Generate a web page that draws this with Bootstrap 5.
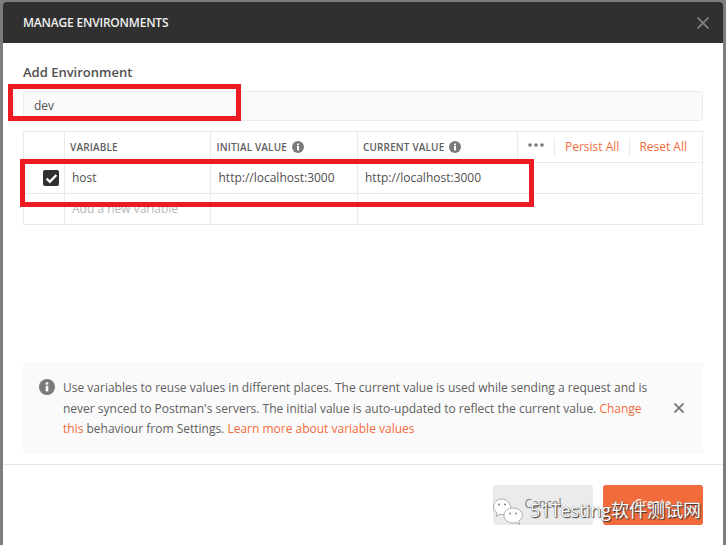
<!DOCTYPE html>
<html lang="en"><head><meta charset="utf-8"><title>Manage Environments</title>
<link href="https://cdn.jsdelivr.net/npm/bootstrap@5.3.0/dist/css/bootstrap.min.css" rel="stylesheet">
<style>
html,body{height:100%;overflow:hidden}
body{background:#7d7d7d;font-family:"Open Sans","Noto Sans CJK SC",sans-serif;font-size:12px;color:#505050;padding:2px 3px 0}
.pm-modal{height:543px;background:#fff;border-radius:3px 3px 0 0}
.pm-head{background:#303030;height:41px;padding:0 14px 0 20px;border-radius:3px 3px 0 0}
.pm-title{color:#f0f0f0;font-size:12px;font-weight:600;letter-spacing:-.2px}
.pm-x{width:12px;height:12px;stroke:#808080;stroke-width:1.8;fill:none}
.pm-body{padding:20px 20px 10px;height:421px}
.pm-label{font-size:13px;font-weight:600;line-height:18px;color:#505050;margin-bottom:10px}
.pm-name{height:30px;background:#fafafa;border:1px solid #ececec;border-radius:3px;padding:0 10px;line-height:28px;margin-bottom:10px}
.pm-grid{border:1px solid #eaeaea;width:680px}
.pm-row{height:31px;border-bottom:1px solid #eaeaea}
.pm-row:last-child{border-bottom:0;height:30px}
.pm-row>div{height:100%;display:flex;align-items:center}
.pm-c1{width:41px;border-right:1px solid #eaeaea;justify-content:flex-end;padding-right:5px}
.pm-c2{width:146px;border-right:1px solid #eaeaea;padding-left:7px}
.pm-c3{width:147px;border-right:1px solid #eaeaea;padding-left:7.5px}
.pm-c4{width:160px;padding-left:7px}
.pm-th{font-size:10px;font-weight:600;color:#606060;letter-spacing:.15px}
.pm-c2.pm-th{padding-left:5px}
.pm-c3.pm-th{padding-left:5.500px}
.pm-c4.pm-th{padding-left:5px;width:159px}
.pm-info{width:12px;height:12px;margin-left:5px;flex:none}
.pm-acts{flex:1}
.pm-sep{width:1px;height:18px;background:#eaeaea}
.pm-sep-tall{height:31px}
.pm-dots{width:16px;height:4px;margin:0 10px 4px}
.pm-link{color:#f26b3a;text-decoration:none}
.pm-act{margin:0 10px}
.pm-act-last{margin-left:9px}
.pm-check{width:16px;height:16px;background:#303030;border-radius:2px}
.pm-ph{color:#b8b8b8}
.pm-note{background:#fafafa;height:92px;padding:16px 16px 0;line-height:20.5px;width:680px;color:#606060}
.pm-note-ic{width:16px;height:16px;margin:1px 8px 0 0;flex:none}
.pm-note-tx{width:590px}
.pm-note-x{width:10px;height:10px;stroke:#707070;stroke-width:1.6;fill:none;margin:25px 0 0 21px;flex:none}
.pm-foot{border-top:1px solid #e6e6e6;padding:20px 20px 0;gap:10px}
.pm-btn{width:100px;height:40px;border:0;border-radius:3px;font-size:12px;font-weight:500;padding:0 0 3px}
.pm-cancel,.pm-cancel:hover{background:#ebebeb;color:#808080}
.pm-create,.pm-create:hover{background:#f26b3a;color:#fff}
.pm-red{position:absolute;border:5px solid #ed1c24;pointer-events:none}
.pm-red-a{left:8px;top:84px;width:233px;height:37px}
.pm-red-b{left:20px;top:159px;width:514px;height:48px}
.pm-wm{position:absolute;left:493px;top:497px;color:#fff;font-size:18px;line-height:26px;text-shadow:1px 1px 1px #333,0 0 1px #555}
.pm-wm svg{width:31px;height:27px;margin-right:6px}
.pm-wm span{margin-bottom:3px}
</style></head><body>
<div class="pm-modal">
 <div class="pm-head d-flex align-items-center justify-content-between">
  <span class="pm-title">MANAGE ENVIRONMENTS</span>
  <svg class="pm-x" viewBox="0 0 12 12"><path d="M.5 .5L11.5 11.5M11.5 .5L.5 11.5"/></svg>
 </div>
 <div class="pm-body d-flex flex-column">
  <div class="pm-label">Add Environment</div>
  <div class="pm-name">dev</div>
  <div class="pm-grid">
   <div class="pm-row d-flex">
    <div class="pm-c1"></div>
    <div class="pm-c2 pm-th">VARIABLE</div>
    <div class="pm-c3 pm-th">INITIAL VALUE<svg class="pm-info" viewBox="0 0 12 12"><circle cx="6" cy="6" r="6" fill="#7a7a7a"/><rect x="5" y="5" width="2" height="4.4" fill="#fff"/><rect x="5" y="2.6" width="2" height="1.6" fill="#fff"/></svg></div>
    <div class="pm-c4 pm-th">CURRENT VALUE<svg class="pm-info" viewBox="0 0 12 12"><circle cx="6" cy="6" r="6" fill="#7a7a7a"/><rect x="5" y="5" width="2" height="4.4" fill="#fff"/><rect x="5" y="2.6" width="2" height="1.6" fill="#fff"/></svg></div>
    <div class="pm-acts">
     <span class="pm-sep pm-sep-tall"></span>
     <svg class="pm-dots" viewBox="0 0 16 4"><circle cx="2" cy="2" r="1.8" fill="#777"/><circle cx="8" cy="2" r="1.8" fill="#777"/><circle cx="14" cy="2" r="1.8" fill="#777"/></svg>
     <span class="pm-sep"></span>
     <a class="pm-link pm-act" href="#">Persist All</a>
     <span class="pm-sep"></span>
     <a class="pm-link pm-act pm-act-last" href="#">Reset All</a>
    </div>
   </div>
   <div class="pm-row d-flex">
    <div class="pm-c1"><span class="pm-check d-flex align-items-center justify-content-center"><svg width="13" height="11" viewBox="0 0 12 10"><path d="M1.500 5.200L4.500 8L10.500 1.800" fill="none" stroke="#fff" stroke-width="2.200"/></svg></span></div>
    <div class="pm-c2">host</div>
    <div class="pm-c3">http://localhost:3000</div>
    <div class="pm-c4">http://localhost:3000</div>
   </div>
   <div class="pm-row d-flex">
    <div class="pm-c1"></div>
    <div class="pm-c2 pm-ph">Add a new variable</div>
    <div class="pm-c3"></div>
    <div class="pm-c4"></div>
   </div>
  </div>
  <div class="pm-note d-flex mt-auto">
   <svg class="pm-note-ic" viewBox="0 0 16 16"><circle cx="8" cy="8" r="8" fill="#7a7a7a"/><rect x="6.700" y="6.800" width="2.600" height="5.600" fill="#fff"/><rect x="6.700" y="3.400" width="2.600" height="2.200" fill="#fff"/></svg>
   <div class="pm-note-tx">Use variables to reuse values in different places. The current value is used while sending a request and is never synced to Postman's servers. The initial value is auto-updated to reflect the current value. <a class="pm-link" href="#">Change this</a> behaviour from Settings. <a class="pm-link" href="#">Learn more about variable values</a></div>
   <svg class="pm-note-x" viewBox="0 0 10 10"><path d="M.5 .5L9.5 9.5M9.5 .5L.5 9.5"/></svg>
  </div>
 </div>
 <div class="pm-foot d-flex justify-content-end">
  <button class="btn pm-btn pm-cancel" type="button">Cancel</button>
  <button class="btn pm-btn pm-create" type="button">Create</button>
 </div>
</div>
<div class="pm-red pm-red-a"></div>
<div class="pm-red pm-red-b"></div>
<div class="pm-wm d-flex align-items-center">
 <svg viewBox="0 0 31 27"><path d="M9 1C4 1 .6 4.500 .6 8.700C.6 11.500 2 13.500 4 15L3.200 18.500L7 16.300C8 16.500 9 16.600 10 16.600C17 16.600 18 11 17.500 8.500C16.500 4 13 1 9 1Z" fill="#fff" stroke="#999" stroke-width=".8"/><path d="M20 10C15 10 11 13 11 17.500C11 22 15 25 20 25C21 25 22 24.800 23 24.500L26.500 26.500L25.700 23C28 21.500 29.500 19.700 29.500 17.500C29.500 13 25 10 20 10Z" fill="#fff" stroke="#999" stroke-width=".8"/><circle cx="6" cy="6.500" r="1.100" fill="#888"/><circle cx="12" cy="6.500" r="1.100" fill="#888"/><circle cx="17" cy="15.500" r="1" fill="#888"/><circle cx="23" cy="15.500" r="1" fill="#888"/></svg>
 <span>51Testing软件测试网</span>
</div>
</body></html>
